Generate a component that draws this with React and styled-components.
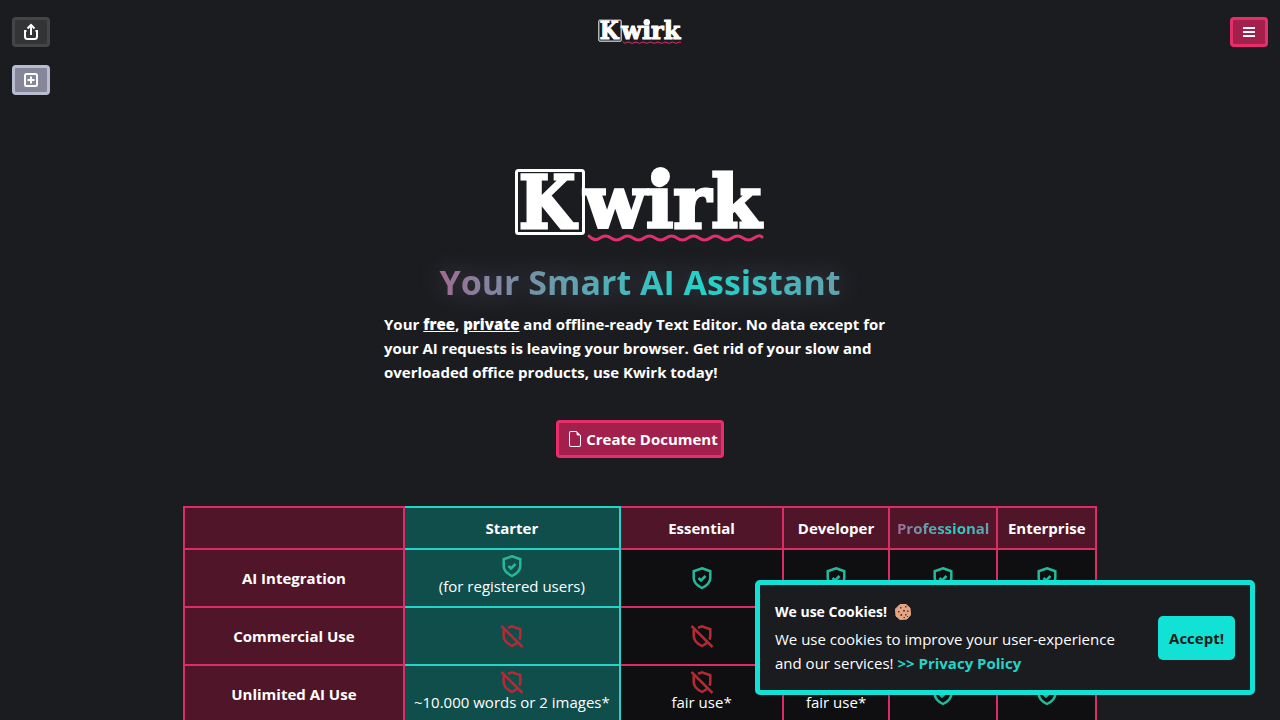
import React from "react";
import styled, { createGlobalStyle, css } from "styled-components";
import { BsFileEarmark } from "react-icons/bs";

const plans = ["Starter", "Essential", "Developer", "Professional", "Enterprise"];

const columnWidths = ["24.100%", "23.700%", "17.900%", "11.600%", "11.900%", "10.800%"];

const features = [
  {
    name: "AI Integration",
    cells: [{ ok: true, note: "(for registered users)" }, { ok: true }, { ok: true }, { ok: true }, { ok: true }],
  },
  {
    name: "Commercial Use",
    cells: [{ ok: false }, { ok: false }, { ok: true }, { ok: true }, { ok: true }],
  },
  {
    name: "Unlimited AI Use",
    cells: [
      { ok: false, note: "~10.000 words or 2 images*" },
      { ok: false, note: "fair use*" },
      { ok: false, note: "fair use*" },
      { ok: true },
      { ok: true },
    ],
  },
];

function Logo({ width }) {
  return (
    <LogoSvg viewBox="0 0 252 76" width={width} role="img" aria-label="Kwirk">
      <rect x="2.5" y="3.5" width="67" height="63" rx="2" fill="none" stroke="#fff" strokeWidth="3" />
      <LogoText $narrow x="5" y="61">K</LogoText>
      <LogoText x="70" y="61">wirk</LogoText>
      <circle cx="146.500" cy="9.500" r="9.500" fill="#fff" />
      <path
        d="M75 69 q5.500 6 11 2 t11 0 t11 0 t11 0 t11 0 t11 0 t11 0 t11 0 t11 0 t11 0 t11 0 t11 0 t11 0 t11 0 t11 0 t8 -1"
        fill="none"
        stroke="#e0306c"
        strokeWidth="3"
        strokeLinecap="round"
      />
    </LogoSvg>
  );
}

function ShieldCheck() {
  return (
    <StatusIcon $color="#25b99a" viewBox="0 0 24 24" role="img" aria-label="Included">
      <path d="M12 2.300 L20.300 5.200 V12 C20.300 16.500 16.500 19.800 12 22 C7.500 19.800 3.700 16.500 3.700 12 V5.200 Z" />
      <path d="M8.500 12 L11 14.500 L15.500 10" />
    </StatusIcon>
  );
}

function ShieldOff() {
  return (
    <StatusIcon $color="#b52a35" viewBox="0 0 24 24" role="img" aria-label="Not included">
      <path d="M8 3.700 L12 2.300 L20.300 5.200 V12 C20.300 13.300 20 14.500 19.400 15.600" />
      <path d="M3.700 5.500 V12 C3.700 16.500 7.500 19.800 12 22 C14 21 15.500 20 16.800 18.800" />
      <path d="M1.500 2 L22.500 23" />
    </StatusIcon>
  );
}

function App() {
  const [showCookies, setShowCookies] = React.useState(true);

  return (
    <Page>
      <GlobalStyle />
      <Header>
        <SideMenu>
          <IconButton $variant="dark" aria-label="Share">
            <ButtonIcon viewBox="0 0 18 18">
              <path d="M9 12 V2.500 M5.500 5.500 L9 2 L12.500 5.500" />
              <path d="M4.500 8 H3 V13.500 Q3 16 5.500 16 H12.500 Q15 16 15 13.500 V8 H13.500" />
            </ButtonIcon>
          </IconButton>
          <IconButton $variant="light" aria-label="New document">
            <ButtonIcon viewBox="0 0 18 18">
              <rect x="3" y="3" width="12" height="12" rx="1.500" />
              <path d="M9 5.500 V12.500 M5.500 9 H12.500" />
            </ButtonIcon>
          </IconButton>
        </SideMenu>
        <Brand>
          <Logo width="84" />
        </Brand>
        <MenuWrap>
          <IconButton $variant="pink" aria-label="Menu">
            <ButtonIcon viewBox="0 0 18 18">
              <path d="M3 5 H15 M3 9 H15 M3 13 H15" />
            </ButtonIcon>
          </IconButton>
        </MenuWrap>
      </Header>

      <Hero>
        <Logo width="252" />
        <Title>Your Smart AI Assistant</Title>
        <Intro>
          Your <u>free</u>, <u>private</u> and offline-ready Text Editor. No data except for your AI
          requests is leaving your browser. Get rid of your slow and overloaded office products, use
          Kwirk today!
        </Intro>
        <CreateButton>
          <BsFileEarmark size={16} />
          Create Document
        </CreateButton>
      </Hero>

      <PlanTable>
        <colgroup>
          {columnWidths.map((width, index) => (
            <Column key={index} $width={width} />
          ))}
        </colgroup>
        <thead>
          <tr>
            <HeadCell aria-label="Feature" />
            {plans.map((plan, index) => (
              <HeadCell key={plan} scope="col" $active={index === 0}>
                {plan === "Professional" ? <Shine>{plan}</Shine> : plan}
              </HeadCell>
            ))}
          </tr>
        </thead>
        <tbody>
          {features.map((feature) => (
            <tr key={feature.name}>
              <HeadCell scope="row">{feature.name}</HeadCell>
              {feature.cells.map((cell, index) => (
                <Cell key={plans[index]} $active={index === 0}>
                  {cell.ok ? <ShieldCheck /> : <ShieldOff />}
                  {cell.note && <Note>{cell.note}</Note>}
                </Cell>
              ))}
            </tr>
          ))}
        </tbody>
      </PlanTable>

      {showCookies && (
        <CookieBanner role="dialog" aria-label="Cookies">
          <div>
            <CookieTitle>
              We use Cookies!
              <CookieIcon viewBox="0 0 16 16" aria-hidden="true">
                <path
                  d="M5 .5 H11 L15 4 L15.500 11 L12 15 L5 15.500 L1 12 L.5 5 Z"
                  fill="#e3a583"
                  stroke="#e3a583"
                  strokeLinejoin="round"
                />
                <path
                  d="M5 3h1.500v1.500H5z M10 2h1.500v1.500H10z M8 6h2v1.500H8z M3 7h1.500v1.500H3z M12 6.500h1.500V8H12z M5.500 10h1.500v2H5.500z M10 10h1.500v1.500H10z M12 12h1v1h-1z M8.500 13h1.500v1H8.500z"
                  fill="#6b3030"
                />
              </CookieIcon>
            </CookieTitle>
            <CookieText>
              We use cookies to improve your user-experience and our services!{" "}
              <a href="#privacy">&gt;&gt; Privacy Policy</a>
            </CookieText>
          </div>
          <AcceptButton onClick={() => setShowCookies(false)}>Accept!</AcceptButton>
        </CookieBanner>
      )}
    </Page>
  );
}

export default App;

const GlobalStyle = createGlobalStyle`
  * {
    box-sizing: border-box;
  }
  html {
    scrollbar-width: none;
  }
  body {
    margin: 0;
    background: #1b1c20;
    color: #fff;
    font-family: "Segoe UI", "Open Sans", "Noto Sans", sans-serif;
    font-size: 15px;
    line-height: 24px;
  }
  button {
    font: inherit;
    cursor: pointer;
  }
`;

const shine = css`
  background: radial-gradient(circle at 66% 50%, #1fd5cb 0%, #6a9bab 56%, #8582a0 82%, #a9648a 105%);
  background-clip: text;
  -webkit-background-clip: text;
  color: transparent;
`;

const Page = styled.div`
  min-height: 100vh;
  overflow: hidden;
`;

const Header = styled.header`
  display: grid;
  grid-template-columns: 1fr auto 1fr;
  align-items: start;
  padding: 17px 12px 0;
`;

const SideMenu = styled.div`
  display: flex;
  flex-direction: column;
  align-items: flex-start;
  gap: 18px;
`;

const Brand = styled.div`
  display: flex;
  align-items: center;
  height: 30px;
`;

const MenuWrap = styled.div`
  display: flex;
  justify-content: flex-end;
`;

const buttonColors = {
  dark: "background: #333435; border-color: #444546;",
  light: "background: #85869a; border-color: #b9bbd0;",
  pink: "background: #a3204c; border-color: #e72e6a;",
};

const IconButton = styled.button`
  display: flex;
  align-items: center;
  justify-content: center;
  width: 38px;
  height: 30px;
  padding: 0;
  color: #fff;
  border: 3px solid;
  border-radius: 4px;
  ${(props) => buttonColors[props.$variant]}
`;

const ButtonIcon = styled.svg`
  width: 18px;
  height: 18px;
  fill: none;
  stroke: currentColor;
  stroke-width: 2;
`;

const LogoSvg = styled.svg`
  display: block;
  overflow: visible;
`;

const LogoText = styled.text`
  font-family: ${(props) => (props.$narrow ? `"DejaVu Serif Condensed", ` : "")}"DejaVu Serif", serif;
  font-size: 72px;
  font-weight: 700;
  fill: #fff;
  stroke: #fff;
  stroke-width: 3;
`;

const Hero = styled.section`
  display: flex;
  flex-direction: column;
  align-items: center;
  padding: 72px 24px 0;
`;

const Title = styled.h1`
  margin: 16px 0 7px;
  font-size: 34px;
  line-height: 46px;
  font-weight: 700;
  filter: drop-shadow(0 0 12px rgba(185, 187, 208, 0.25));
  ${shine}
`;

const Intro = styled.p`
  width: 100%;
  max-width: 512px;
  margin: 0 0 36px;
  font-weight: 700;

  u {
    font-weight: 800;
  }
`;

const CreateButton = styled.button`
  display: flex;
  align-items: center;
  gap: 3px;
  height: 38px;
  padding: 0 3px 0 8px;
  color: #fff;
  font-weight: 700;
  background: #a3204c;
  border: 3px solid #e72e6a;
  border-radius: 4px;
`;

const PlanTable = styled.table`
  width: 914px;
  max-width: 100%;
  margin: 48px auto 0;
  table-layout: fixed;
  border-collapse: collapse;
  text-align: center;
`;

const Column = styled.col`
  width: ${(props) => props.$width};
`;

const cellBase = css`
  padding: 4px;
  border: 2px solid ${(props) => (props.$active ? "#22d5c8" : "#dc2c66")};
`;

const HeadCell = styled.th`
  ${cellBase}
  height: 42px;
  background: ${(props) => (props.$active ? "#104e4c" : "#501529")};
`;

const Cell = styled.td`
  ${cellBase}
  height: 58px;
  background: ${(props) => (props.$active ? "#104e4c" : "#0f0f11")};
`;

const Note = styled.div`
  margin-bottom: 8px;
  line-height: 16px;
`;

const Shine = styled.span`
  ${shine}
`;

const StatusIcon = styled.svg`
  display: block;
  width: 24px;
  height: 24px;
  margin: 0 auto;
  fill: none;
  stroke: ${(props) => props.$color};
  stroke-width: 2.5;
`;

const CookieBanner = styled.aside`
  position: fixed;
  right: 25px;
  bottom: 25px;
  display: flex;
  align-items: center;
  justify-content: space-between;
  gap: 24px;
  width: 500px;
  max-width: 92vw;
  padding: 15px;
  background: #1b1c20;
  border: 5px solid #12e2d5;
  border-radius: 5px;
`;

const CookieTitle = styled.strong`
  display: flex;
  align-items: center;
  gap: 8px;
  margin-bottom: 3px;
  font-size: 14px;
`;

const CookieIcon = styled.svg`
  width: 16px;
  height: 16px;
`;

const CookieText = styled.p`
  margin: 0;

  a {
    color: #22d5c8;
    font-weight: 700;
    text-decoration: none;
  }
`;

const AcceptButton = styled.button`
  flex: none;
  height: 44px;
  padding: 0 11px;
  color: #1b1c20;
  font-weight: 700;
  background: #12e2d5;
  border: 0;
  border-radius: 5px;
`;
